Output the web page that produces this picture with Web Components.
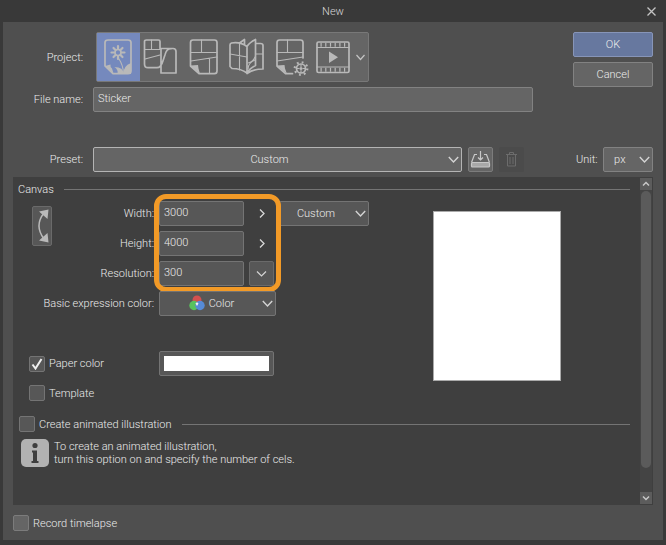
<!DOCTYPE html>
<html lang="en">
<head>
<meta charset="utf-8">
<title>New</title>
<style>
  body {
    margin: 0;
    background: #393939;
    color: #ececec;
    font: 300 11px/13px Roboto, "Liberation Sans", sans-serif;
  }
</style>
</head>
<body>
<new-dialog></new-dialog>

<script>
const define = (name, html, setup) => {
  const template = document.createElement('template');
  template.innerHTML = html;
  customElements.define(name, class extends HTMLElement {
    connectedCallback() {
      if (this.shadowRoot) return;
      const root = this.attachShadow({ mode: 'open' });
      root.append(template.content.cloneNode(true));
      if (setup) setup(this, root);
    }
  });
};

const controls = `
  * { box-sizing: border-box; }
  button, input, select { margin: 0; font: inherit; color: inherit; outline: none; border-radius: 2px; }
`;

define('title-bar', `
  <style>
    :host { display: flex; align-items: center; height: 22px; }
    h1 { flex: 1; margin: 0; font: inherit; text-align: center; color: #d8d8d8; }
    button { width: 24px; height: 22px; padding: 0; border: 0; background: none; display: grid; place-items: center; margin-left: -24px; }
  </style>
  <h1><slot></slot></h1>
  <button type="button" aria-label="Close">
    <svg width="9" height="9" viewBox="0 0 9 9" stroke="#c4c4c4" stroke-width="1.3"><path d="M.5.5l8 8M8.500.5l-8 8"/></svg>
  </button>`);

define('push-button', `
  <style>${controls}
    :host { display: block; }
    button { width: 100%; height: 25px; padding: 0; border: 1px solid #828282; background: #656565; }
    :host([primary]) button { background: #67789f; border-color: #8795b8; }
  </style>
  <button type="button"><slot></slot></button>`);

define('icon-button', `
  <style>${controls}
    :host { display: block; width: 25px; height: 25px; }
    button { width: 100%; height: 100%; padding: 0; border: 1px solid #7c7c7c; background: #656565; display: grid; place-items: center; }
    :host([dim]) button { background: #575757; border-color: #6a6a6a; }
    :host([flat]) button { background: none; border-color: transparent; }
    :host([off]) button { background: #4b4b4b; border-color: #4b4b4b; }
  </style>
  <button type="button"><slot></slot></button>`,
  (host, root) => {
    const b = root.querySelector('button');
    b.setAttribute('aria-label', host.getAttribute('label'));
    b.disabled = host.hasAttribute('off');
  });

define('text-field', `
  <style>${controls}
    :host { display: flex; align-items: center; gap: var(--label-gap, 10px); }
    label { width: var(--label-width); text-align: right; white-space: nowrap; }
    input { flex: 1; min-width: 0; height: 25px; padding: 0 4px 2px; border: 1px solid var(--edge, #828282); background: var(--fill, #656565); }
  </style>
  <label for="f"></label><input id="f" type="text">`,
  (host, root) => {
    root.querySelector('label').textContent = host.getAttribute('label');
    root.querySelector('input').value = host.getAttribute('value');
  });

define('drop-down', `
  <style>${controls}
    :host { display: flex; align-items: center; gap: var(--label-gap, 10px); }
    label { width: var(--label-width, auto); text-align: right; white-space: nowrap; }
    label[hidden] { display: none; }
    .box { position: relative; flex: 1; min-width: 0; }
    select { display: block; appearance: none; width: 100%; height: 25px; padding: 0 16px 0 0; border: 1px solid var(--edge, #828282); background: var(--fill, #656565); text-align-last: center; }
    :host([icon]) select { padding-left: 24px; }
    .chevron { position: absolute; right: 3px; top: 9px; pointer-events: none; }
    slot { position: absolute; left: 30px; top: 4px; pointer-events: none; display: block; }
  </style>
  <label for="f"></label>
  <div class="box">
    <select id="f"></select>
    <svg class="chevron" width="11" height="8" viewBox="0 0 11 8" fill="none" stroke="#d4d4d4" stroke-width="1.4"><path d="M.8 1l4.700 5 4.700-5"/></svg>
    <slot></slot>
  </div>`,
  (host, root) => {
    const label = root.querySelector('label'), select = root.querySelector('select');
    label.textContent = host.getAttribute('label');
    if (host.hasAttribute('bare')) { label.hidden = true; select.setAttribute('aria-label', host.getAttribute('label')); }
    select.add(new Option(host.getAttribute('value')));
  });

define('check-box', `
  <style>${controls}
    :host { display: block; }
    label { display: flex; align-items: center; gap: 4px; white-space: nowrap; }
    .box { position: relative; width: 16px; height: 16px; }
    input { display: block; appearance: none; width: 16px; height: 16px; border: 1px solid var(--edge, #7c7c7c); background: var(--fill, #656565); }
    svg { position: absolute; left: 2px; top: 2px; visibility: hidden; pointer-events: none; }
    input:checked + svg { visibility: visible; }
  </style>
  <label><span class="box"><input type="checkbox"><svg width="12" height="12" viewBox="0 0 12 12" fill="none" stroke="#f0f0f0" stroke-width="2"><path d="M1.500 6.500l3 4 6-9.500"/></svg></span><span><slot></slot></span></label>`,
  (host, root) => { root.querySelector('input').checked = host.hasAttribute('checked'); });

define('project-picker', `
  <style>${controls}
    :host { display: flex; align-items: center; gap: 13px; }
    .name { width: var(--label-width); text-align: right; }
    .bar { display: flex; width: 273px; height: 50px; border: 1px solid #787878; border-radius: 2px; background: #656565; }
    button { flex: 1; padding: 0; border: 0; border-radius: 0; background: none; }
    button[aria-pressed=true] { background: #7589bd; }
    button.more { flex: none; width: 13px; }
    svg { display: block; }
    svg.tool { width: 43px; height: 48px; fill: none; stroke: #b9b9b9; stroke-width: 1.7; stroke-linejoin: round; stroke-linecap: round; }
    .tool .thin { stroke-width: 1.1; }
    .tool .plain { fill: #b9b9b9; stroke: none; }
  </style>
  <span class="name">Project:</span>
  <div class="bar" role="group" aria-label="Project">
    <button type="button" aria-label="Illustration" aria-pressed="true">
      <svg class="tool" viewBox="97 33 43 48">
        <path d="M113 73.700h15q3 0 3-3V42.500q0-2.500-3-2.500h-20q-3 0-3 2.500V66z"/>
        <path class="plain" d="M105 66l5.500-1.500q-.5 3 1.500 4l1.500 5z"/>
        <g stroke-width="2.200"><path d="M118 49v-3M118 56v3M121.500 52.500h3M114.500 52.500h-3M120.500 50l2-2M115.500 50l-2-2M120.500 55l2 2M115.500 55l-2 2"/></g>
        <circle cx="118" cy="52.500" r="3" stroke-width="1.600"/>
        <path class="thin" d="M119 59q4 6 4.500 14"/>
        <path class="plain" d="M114.500 67q9 0 9 7h-6q1-4-3-7zM131 63q-8 3-7.500 11h7.500z"/>
      </svg></button>
    <button type="button" aria-label="Webtoon">
      <svg class="tool" viewBox="140 33 43 48">
        <path d="M157 67.700h-9q-3.500 0-3.500-3.700V41.500q0-1.500 2-1.500h12q1.500 0 1.500 1.500v7h13q3 0 3 3V73H161V48.500M157 67.700q4 0 6-7l2-6q1.500-6 6-6"/>
        <path class="thin" d="M151.500 40v9.500M145 49.500h15M145 59l15-4"/>
      </svg></button>
    <button type="button" aria-label="Comic">
      <svg class="tool" viewBox="183 33 43 48">
        <path d="M199 73.700h15.500q2.500 0 2.500-3V42.500q0-2.500-2.500-2.500H193q-2.500 0-2.500 2.500V66z"/>
        <path class="plain" d="M190.500 65.500l7.500-.5.500 3.500 1.500 5.500z"/>
        <path class="thin" d="M201.500 40v12.500M191 52.500h26M191 61l26-4M209.500 58.500V73"/>
      </svg></button>
    <button type="button" aria-label="Book">
      <svg class="tool" viewBox="226 33 43 48">
        <path d="M247 46.500q-7-5-15.500-3.500-1.500.5-1.500 2v21.500l2 2q9 0 15 4.500zM247 46.500q2.500-4 8.500-7v26q-6 3-8.500 7.500M255.500 43.500h5q2.500 0 2.500 2V69q-10 0-16 4.500M239.500 43l5-3.500v4"/>
        <path class="thin" d="M239.500 44v26M230 54l17 3M248 63q5-1 7-6M248 69q0-6 7-9M255.500 54h7"/>
      </svg></button>
    <button type="button" aria-label="Show all comic settings">
      <svg class="tool" viewBox="269 33 43 48">
        <path d="M303 58V42.500q0-2.500-2.500-2.500h-21q-2.500 0-2.500 2.500V66l8.500 7.700h7"/>
        <path class="plain" d="M277 65.500l7.500-.5.500 3.500 2 5.500z"/>
        <path class="thin" d="M287.500 40v12.500M277 52.500h26M277 61l26-4"/>
        <circle cx="301" cy="68.500" r="4.500"/>
        <circle class="plain" cx="301" cy="68.500" r="1.500"/>
        <circle cx="301" cy="68.500" r="6.300" stroke-width="2.200" stroke-linecap="butt" stroke-dasharray="1.800 3.140"/>
        <path class="thin" d="M301 64.500v2M297 68.500h2M303 68.500h2M301 70.500v2"/>
      </svg></button>
    <button type="button" aria-label="Animation">
      <svg class="tool" viewBox="312 33 43 48">
        <rect x="317" y="42" width="32" height="30.500" rx="1.500"/>
        <path stroke-width="1.200" d="M317 47.500h32M317 67h32"/>
        <path stroke-width="4" stroke-linecap="butt" stroke-dasharray="1.200 3.500" d="M320.500 44.800h28M320.500 69.700h28"/>
        <path class="plain" d="M329 51.500l9 5.700-9 5.700z"/>
      </svg></button>
    <button type="button" class="more" aria-label="More">
      <svg width="11" height="9" viewBox="0 0 11 9" fill="none" stroke="#c4c4c4" stroke-width="1.200"><path d="M1.500 2l4 4.500 4-4.500"/></svg></button>
  </div>`);

define('section-heading', `
  <style>
    :host { display: flex; align-items: center; gap: 10px; }
    :host::after { content: ""; flex: 1; height: 1px; background: #747474; }
  </style>
  <slot></slot>`);

define('info-note', `
  <style>
    :host { display: flex; align-items: center; gap: 5px; }
    p { margin: 0; white-space: nowrap; }
  </style>
  <svg width="28" height="28" viewBox="0 0 28 28"><rect width="28" height="28" rx="5" fill="#b2b2b2"/><circle cx="14" cy="6.500" r="2.600" fill="#3e3e3e"/><path fill="#3e3e3e" d="M11 11.500h5V22h1.500v2h-7v-2H12v-8.500h-1z"/></svg>
  <p><slot></slot></p>`);

define('scroll-rail', `
  <style>
    :host { display: flex; flex-direction: column; width: 12px; background: #444; }
    button { height: 12px; padding: 0; border: 0; background: #5c5c5c; display: grid; place-items: center; }
    .track { flex: 1; padding: 1px 1px 0; display: flex; flex-direction: column; }
    .thumb { height: 92%; width: 10px; border-radius: 5px; background: #5b5b5b; }
    svg { fill: none; stroke: #c8c8c8; stroke-width: 1.500; }
  </style>
  <button type="button" aria-label="Scroll up"><svg width="8" height="6" viewBox="0 0 8 6"><path d="M1 4.500l3-3 3 3"/></svg></button>
  <div class="track"><div class="thumb"></div></div>
  <button type="button" aria-label="Scroll down"><svg width="8" height="6" viewBox="0 0 8 6"><path d="M1 1.500l3 3 3-3"/></svg></button>`);

define('color-well', `
  <style>
    * { box-sizing: border-box; }
    :host { display: block; }
    input { display: block; appearance: none; width: 115px; height: 25px; padding: 4px; border: 1px solid #747474; border-radius: 2px; background: #575757; }
    input::-webkit-color-swatch-wrapper { padding: 0; }
    input::-webkit-color-swatch { border: 0; border-radius: 0; }
  </style>
  <input type="color" value="#ffffff" aria-label="Paper color">`);

define('canvas-settings', `
  <style>
    * { box-sizing: border-box; }
    :host { display: block; flex: 1; min-width: 0; padding: 6px 9px 38px 5px; --fill: #575757; --edge: #747474; --label-gap: 5px; }
    .main { display: flex; }
    .form { width: 352px; padding-top: 5px; }
    .top { display: flex; }
    .swap { width: 20px; height: 40px; margin: 5px 0 0 14px; }
    .sizes { position: relative; display: flex; flex-direction: column; gap: 5px; margin-left: 22px; --label-width: 80px; }
    .row { display: flex; gap: 5px; }
    .row text-field { width: 170px; }
    .row drop-down { width: 90px; }
    .ring { position: absolute; left: 80px; top: -7px; width: 127px; height: 98px; border: 5px solid #f29a27; border-radius: 12px; pointer-events: none; }
    .color { width: 234px; margin: 5px 0 0 24px; --label-width: 112px; }
    .paper { display: flex; align-items: center; justify-content: space-between; margin: 35px 96px 0 11px; }
    .template { margin: 9px 0 0 11px; }
    .animated { margin: 15px 0 7px 1px; }
    info-note { margin-left: 3px; }
    .preview { flex: 1; display: flex; justify-content: center; padding: 15px 6px 0 0; }
    .sheet { width: 128px; height: 170px; background: #fff; border: 1px solid #aaa; }
  </style>
  <section-heading>Canvas</section-heading>
  <div class="main">
    <div class="form">
      <div class="top">
        <icon-button class="swap" dim label="Swap width and height"><svg width="18" height="38" viewBox="0 0 18 38"><path d="M11 6Q1 18.500 11 32" fill="none" stroke="#b9b9b9" stroke-width="1.500"/><path fill="#b9b9b9" d="M6 4.500l9.500-2-1 9.500zM6 33.500l9.500 2-1-9.500z"/></svg></icon-button>
        <div class="sizes">
          <div class="row"><text-field label="Width:" value="3000"></text-field>
            <icon-button flat label="Width presets"><svg width="8" height="11" viewBox="0 0 8 11" fill="none" stroke="#d8d8d8" stroke-width="1.300"><path d="M2 1.500l4 4-4 4"/></svg></icon-button>
            <drop-down bare label="Size" value="Custom"></drop-down></div>
          <div class="row"><text-field label="Height:" value="4000"></text-field>
            <icon-button flat label="Height presets"><svg width="8" height="11" viewBox="0 0 8 11" fill="none" stroke="#d8d8d8" stroke-width="1.300"><path d="M2 1.500l4 4-4 4"/></svg></icon-button></div>
          <div class="row"><text-field label="Resolution:" value="300"></text-field>
            <icon-button dim label="Resolution presets"><svg width="11" height="8" viewBox="0 0 11 8" fill="none" stroke="#d4d4d4" stroke-width="1.200"><path d="M1 1.500l4.500 4.500L10 1.500"/></svg></icon-button></div>
          <div class="ring"></div>
        </div>
      </div>
      <drop-down class="color" icon label="Basic expression color:" value="Color"><svg width="16" height="16" viewBox="0 0 16 16"><circle cx="8" cy="5" r="4.500" fill="#d4504f"/><circle cx="5" cy="10.500" r="4.700" fill="#59c25d"/><circle cx="11" cy="10.500" r="4.700" fill="#568bd8"/><path fill="#f2f2f2" d="M6.500 8.500Q8 6.500 9.500 8.500L8 11z"/></svg></drop-down>
      <div class="paper"><check-box checked>Paper color</check-box><color-well></color-well></div>
      <check-box class="template">Template</check-box>
    </div>
    <div class="preview"><div class="sheet"></div></div>
  </div>
  <section-heading class="animated"><check-box>Create animated illustration</check-box></section-heading>
  <info-note>To create an animated illustration,<br>turn this option on and specify the number of cels.</info-note>`);

define('new-dialog', `
  <style>
    * { box-sizing: border-box; }
    :host { display: block; padding: 0 3px 5px; }
    main { padding: 10px 10px 9px; background: #4f4f4f; --label-width: 70px; }
    .head { display: flex; gap: 40px; }
    .fields { flex: 1; display: grid; gap: 5px; }
    .actions { width: 80px; display: grid; gap: 5px; align-content: start; }
    .preset { display: flex; align-items: center; gap: 6px; margin: 35px 0 5px; }
    .preset .main { flex: 1; --edge: #b4b4b4; }
    .preset .unit { margin-left: 46px; --label-width: auto; --label-gap: 5px; width: 77px; }
    .panel { display: flex; background: #3f3f3f; margin-bottom: 10px; }
    scroll-rail { margin: 1px; }
  </style>
  <title-bar>New</title-bar>
  <main>
    <div class="head">
      <div class="fields">
        <project-picker></project-picker>
        <text-field label="File name:" value="Sticker"></text-field>
      </div>
      <div class="actions">
        <push-button primary>OK</push-button>
        <push-button>Cancel</push-button>
      </div>
    </div>
    <div class="preset">
      <drop-down class="main" label="Preset:" value="Custom"></drop-down>
      <icon-button label="Save preset"><svg width="21" height="19" viewBox="0 0 21 19" fill="none" stroke="#c8c8c8" stroke-width="1.200"><path d="M7 4.500H4.500L1.500 12.500M14 4.500h2.500l3 8M10.500 1v9M8 7.500l2.500 2.500L13 7.500"/><rect x="1.500" y="12.500" width="18" height="4.500" rx="1" fill="#a8a8a8"/></svg></icon-button>
      <icon-button off label="Delete preset"><svg width="13" height="15" viewBox="0 0 13 15" fill="none" stroke="#6c6c6c"><path d="M1 2.500h11M4.500 2.500v-2h4v2M2.500 3v11h8V3M5 5v7M8 5v7"/></svg></icon-button>
      <drop-down class="unit" label="Unit:" value="px"></drop-down>
    </div>
    <div class="panel">
      <canvas-settings></canvas-settings>
      <scroll-rail></scroll-rail>
    </div>
    <check-box>Record timelapse</check-box>
  </main>`);
</script>
</body>
</html>
